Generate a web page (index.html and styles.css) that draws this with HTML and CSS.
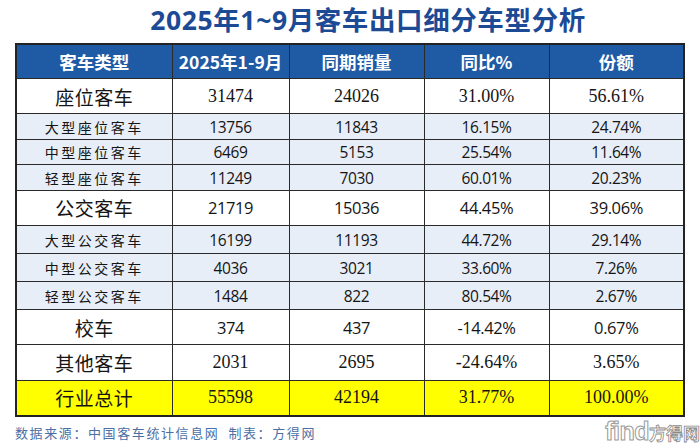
FILE: index.html
```html
<!DOCTYPE html>
<html lang="zh">
<head>
<meta charset="utf-8">
<link rel="stylesheet" href="styles.css">
</head>
<body>
<div class="page">
  <h1 class="title">2025年1~9月客车出口细分车型分析</h1>
  <table class="data">
    <colgroup>
      <col class="c1"><col class="c2"><col class="c3"><col class="c4"><col class="c5">
    </colgroup>
    <thead>
      <tr class="head"><th>客车类型</th><th>2025年1-9月</th><th>同期销量</th><th>同比%</th><th>份额</th></tr>
    </thead>
    <tbody>
      <tr class="main"><td class="lbl">座位客车</td><td>31474</td><td>24026</td><td>31.00%</td><td>56.61%</td></tr>
      <tr class="sub s1"><td class="lbl">大型座位客车</td><td>13756</td><td>11843</td><td>16.15%</td><td>24.74%</td></tr>
      <tr class="sub s1"><td class="lbl">中型座位客车</td><td>6469</td><td>5153</td><td>25.54%</td><td>11.64%</td></tr>
      <tr class="sub s1"><td class="lbl">轻型座位客车</td><td>11249</td><td>7030</td><td>60.01%</td><td>20.23%</td></tr>
      <tr class="main"><td class="lbl">公交客车</td><td class="sans">21719</td><td class="sans">15036</td><td class="sans">44.45%</td><td class="sans">39.06%</td></tr>
      <tr class="sub s2"><td class="lbl">大型公交客车</td><td>16199</td><td>11193</td><td>44.72%</td><td>29.14%</td></tr>
      <tr class="sub s2"><td class="lbl">中型公交客车</td><td>4036</td><td>3021</td><td>33.60%</td><td>7.26%</td></tr>
      <tr class="sub s2"><td class="lbl">轻型公交客车</td><td>1484</td><td>822</td><td>80.54%</td><td>2.67%</td></tr>
      <tr class="main"><td class="lbl">校车</td><td class="sans">374</td><td class="sans">437</td><td class="sans">-14.42%</td><td class="sans">0.67%</td></tr>
      <tr class="main"><td class="lbl">其他客车</td><td>2031</td><td>2695</td><td>-24.64%</td><td>3.65%</td></tr>
      <tr class="main total"><td class="lbl">行业总计</td><td>55598</td><td>42194</td><td>31.77%</td><td>100.00%</td></tr>
    </tbody>
  </table>
  <div class="foot">
    <p class="source">数据来源：中国客车统计信息网&nbsp;&nbsp;制表：方得网</p>
    <div class="mark"><span class="find">find</span><span class="cn">方得网</span></div>
  </div>
</div>
</body>
</html>
```

FILE: styles.css
```css
html, body {
  margin: 0;
  padding: 0;
  background: #ffffff;
}
.page {
  width: 700px;
  height: 446px;
  overflow: hidden;
  display: flex;
  flex-direction: column;
  align-items: flex-start;
}
.title {
  box-sizing: border-box;
  margin: 4px 0 0 0;
  padding-left: 36px;
  width: 700px;
  height: 43px;
  text-align: center;
  font-family: "Open Sans", "Noto Sans CJK SC", sans-serif;
  font-weight: 700;
  font-size: 26.5px;
  line-height: 32px;
  color: #1c4a95;
  letter-spacing: 0.6px;
}
.data {
  margin-left: 15px;
  width: 668px;
  border-collapse: collapse;
  table-layout: fixed;
  border: 2px solid #232323;
}
.c1 { width: 156px; }
.c2 { width: 117px; }
.c3 { width: 135px; }
.c4 { width: 125px; }
.c5 { width: 135px; }
.data th, .data td {
  border: 1.5px solid #2a2a2a;
  padding: 0;
  text-align: center;
  vertical-align: middle;
  color: #151515;
}
.head th {
  height: 33.5px;
  background: #1f5aa5;
  color: #ffffff;
  font-family: "Noto Sans CJK SC", sans-serif;
  font-weight: 700;
  font-size: 17.5px;
}
.main td {
  height: 34.3px;
  font-family: "Liberation Serif", serif;
  font-size: 18px;
}
.main td.lbl {
  font-family: "Noto Sans CJK SC", sans-serif;
  font-size: 19px;
  font-weight: 400;
  letter-spacing: 0.5px;
}
.main td.sans {
  font-family: "Open Sans", "Noto Sans", sans-serif;
  font-size: 16.5px;
  letter-spacing: -0.4px;
}
.sub td {
  background: #e7eef8;
  font-family: "Open Sans", "Noto Sans", sans-serif;
  font-size: 15.5px;
  letter-spacing: -0.4px;
}
.s1 td { height: 24.5px; }
.s2 td { height: 27px; }
.sub td.lbl {
  font-family: "Noto Sans CJK SC", sans-serif;
  font-size: 14px;
  letter-spacing: 2.5px;
}
.total td {
  background: #ffff00;
}
.foot {
  width: 700px;
  flex: 1;
  display: flex;
  justify-content: space-between;
  align-items: flex-start;
}
.source {
  margin: 6px 0 0 15px;
  font-family: "Noto Sans CJK SC", sans-serif;
  font-size: 13px;
  letter-spacing: 1.6px;
  color: #4a6fa5;
}
.mark {
  padding-top: 0;
  display: flex;
  align-items: baseline;
}
.find {
  font-family: "Liberation Sans", sans-serif;
  font-size: 25px;
  font-weight: 700;
  color: #ffffff;
  -webkit-text-stroke: 1px #9a9a9a;
  letter-spacing: -0.5px;
}
.cn {
  font-family: "Noto Sans CJK SC", sans-serif;
  font-size: 17px;
  font-weight: 700;
  color: #ffffff;
  -webkit-text-stroke: 0.8px #8a8a8a;
}
```
